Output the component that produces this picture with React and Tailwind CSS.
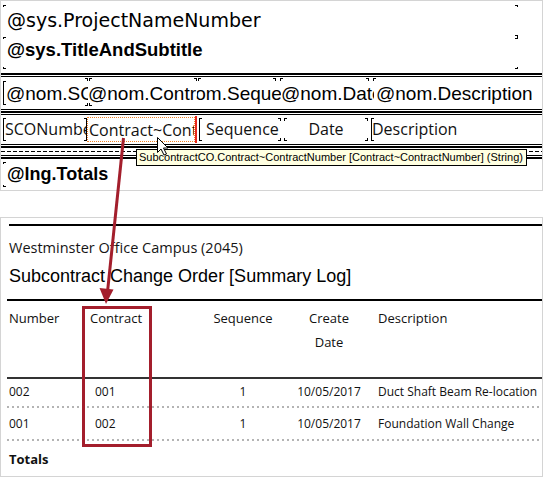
import React from "react";

function Mark({ className }) {
  return <span className={"absolute border-black " + className} />;
}

function TopPanel() {
  return (
    <div className="w-[543px] h-[191px] border border-[#d4d4d4] flex flex-col bg-white">
      {/* header band */}
      <div className="relative h-[72px] pl-[6px]">
        <div className="pt-[8px] leading-[22px] text-[19px] text-black font-['DejaVu_Sans',sans-serif] whitespace-nowrap">
          @sys.ProjectNameNumber
        </div>
        <div className="mt-[7px] leading-[24px] text-[18.5px] font-bold text-black font-['Liberation_Sans',sans-serif] whitespace-nowrap">
          @sys.TitleAndSubtitle
        </div>
        <Mark className="left-[2px] top-[4px] w-[3px] h-[2px] border-l border-t" />
        <Mark className="left-[2px] top-[66px] w-[3px] h-[2px] border-l border-b" />
        <Mark className="left-[2px] top-[36px] w-[3px] h-[2px] border-l border-t" />
        <Mark className="left-[514px] top-[4px] w-[3px] h-[2px] border-r border-t" />
        <Mark className="left-[514px] top-[34px] w-[3px] h-[4px] border-r border-t border-b" />
        <Mark className="left-[514px] top-[66px] w-[3px] h-[2px] border-r border-b" />
      </div>
      {/* double line */}
      <div className="h-[4px] border-t-2 border-b border-black" />
      {/* nom band */}
      <div className="relative h-[32px] flex text-[19px] leading-[22px] text-black font-['Liberation_Sans',sans-serif] whitespace-nowrap">
        <div className="w-[87px] pl-[5px] pt-[6px] overflow-hidden">@nom.SCONumber</div>
        <div className="w-[109px] pt-[6px] overflow-hidden">@nom.Contract</div>
        <div className="w-[84px] pt-[6px] overflow-hidden flex justify-center">@nom.Sequence</div>
        <div className="w-[93px] pt-[6px] overflow-hidden">@nom.Date</div>
        <div className="flex-1 pl-[2px] pt-[6px] overflow-hidden">@nom.Description</div>
        <Mark className="left-[2px] top-[4px] w-[3px] h-[24px] border-l border-t border-b" />
        <Mark className="left-[84px] top-[1px] w-[3px] h-[3px] border-r border-t" />
        <Mark className="left-[88px] top-[1px] w-[3px] h-[3px] border-l border-t" />
        <Mark className="left-[84px] top-[26px] w-[3px] h-[3px] border-r border-b" />
        <Mark className="left-[88px] top-[26px] w-[3px] h-[3px] border-l border-b" />
        <Mark className="left-[193px] top-[1px] w-[3px] h-[3px] border-r border-t" />
        <Mark className="left-[197px] top-[1px] w-[3px] h-[3px] border-l border-t" />
        <Mark className="left-[272px] top-[1px] w-[3px] h-[3px] border-r border-t" />
        <Mark className="left-[279px] top-[1px] w-[3px] h-[3px] border-l border-t" />
        <Mark className="left-[365px] top-[1px] w-[3px] h-[3px] border-r border-t" />
        <Mark className="left-[372px] top-[1px] w-[3px] h-[3px] border-l border-t" />
      </div>
      {/* lines */}
      <div className="h-[1px] bg-black" />
      <div className="h-[1px]" />
      <div className="h-[2px] bg-black" />
      <div className="h-[1px]" />
      <div className="h-[1px] bg-black" />
      {/* field band */}
      <div className="relative h-[29px] flex text-[16px] leading-[22px] text-[#111] font-['Open_Sans',sans-serif] whitespace-nowrap">
        <div className="w-[86px] pl-[4px] pt-[3px] overflow-hidden">SCONumber</div>
        <div className="relative w-[108px] h-[25px] mt-[2px] border border-dotted border-[#f0822a] pl-[1px] pt-[1px] overflow-hidden">
          Contract~ContractNumber
        </div>
        <div className="w-[2px] h-[27px] mt-[1px] bg-[#e8281e]" />
        <div className="w-[86px] pl-[9px] pt-[3px] overflow-hidden">Sequence</div>
        <div className="w-[86px] pt-[3px] overflow-hidden flex justify-center">Date</div>
        <div className="flex-1 pl-[3px] pt-[3px] overflow-hidden">Description</div>
        <Mark className="left-[2px] top-[3px] w-[3px] h-[23px] border-l border-t border-b" />
        <Mark className="left-[83px] top-[3px] w-[3px] h-[23px] border-r border-t border-b" />
        <Mark className="left-[198px] top-[3px] w-[3px] h-[23px] border-l border-t border-b" />
        <Mark className="left-[277px] top-[3px] w-[3px] h-[3px] border-r border-t" />
        <Mark className="left-[277px] top-[23px] w-[3px] h-[3px] border-r border-b" />
        <Mark className="left-[283px] top-[3px] w-[3px] h-[3px] border-l border-t" />
        <Mark className="left-[283px] top-[23px] w-[3px] h-[3px] border-l border-b" />
        <Mark className="left-[364px] top-[3px] w-[3px] h-[3px] border-r border-t" />
        <Mark className="left-[364px] top-[23px] w-[3px] h-[3px] border-r border-b" />
        <Mark className="left-[370px] top-[3px] w-[3px] h-[23px] border-l border-t border-b" />
      </div>
      {/* lines */}
      <div className="h-[1px] bg-black" />
      <div className="h-[1px]" />
      <div className="h-[2px] bg-black" />
      <div className="h-[3px]" />
      <div className="h-[1px] bg-[repeating-linear-gradient(to_right,#000_0px,#000_4px,transparent_4px,transparent_6px)]" />
      <div className="h-[3px]" />
      <div className="h-[1px] bg-black" />
      <div className="h-[1px]" />
      <div className="h-[2px] bg-black" />
      {/* totals band */}
      <div className="relative flex-1 pl-[6px] pt-[4px] text-[18px] leading-[22px] font-bold text-black font-['Liberation_Sans',sans-serif]">
        @lng.Totals
        <Mark className="left-[2px] top-[3px] w-[3px] h-[2px] border-l border-t" />
        <Mark className="left-[2px] top-[26px] w-[3px] h-[2px] border-l border-b" />
      </div>
    </div>
  );
}

const dotted =
  "h-[2px] ml-[6px] bg-[repeating-linear-gradient(to_right,#b4b4b4_0px,#b4b4b4_2px,transparent_2px,transparent_5px)]";

function Row({ a, b, c, d, e }) {
  return (
    <div className="flex h-[16px] text-[12px] leading-[16px] text-[#111] font-['Open_Sans',sans-serif] whitespace-nowrap">
      <div className="w-[86px] pl-[8px]">{a}</div>
      <div className="w-[119px] pl-[8px]">{b}</div>
      <div className="w-[74px] text-center">{c}</div>
      <div className="w-[98px] text-center">{d}</div>
      <div className="flex-1 pl-[0px]">{e}</div>
    </div>
  );
}

function BottomPanel() {
  return (
    <div className="w-[543px] h-[260px] border border-[#d4d4d4] flex flex-col bg-white">
      <div className="mt-[6px] ml-[8px] h-[2px] bg-black" />
      <div className="mt-[12px] pl-[8px] text-[14.5px] leading-[20px] text-[#151515] font-['Open_Sans',sans-serif] whitespace-nowrap">
        Westminster Office Campus (2045)
      </div>
      <div className="mt-[8px] pl-[8px] text-[18px] leading-[21px] text-black font-['Liberation_Sans',sans-serif] whitespace-nowrap">
        Subcontract Change Order [Summary Log]
      </div>
      <div className="mt-[12px] ml-[6px] h-[2px] bg-black" />
      <div className="flex pt-[5px] h-[76px] text-[13px] leading-[24px] text-[#111] font-['Open_Sans',sans-serif] whitespace-nowrap">
        <div className="w-[81px] pl-[8px]">Number</div>
        <div className="w-[124px] pl-[8px]">Contract</div>
        <div className="w-[74px] text-center">Sequence</div>
        <div className="w-[98px] text-center">
          Create
          <br />
          Date
        </div>
        <div className="flex-1">Description</div>
      </div>
      <div className="ml-[6px] h-[2px] bg-[#333]" />
      <div className="pt-[5px] h-[27px]">
        <Row a="002" b="001" c="1" d="10/05/2017" e="Duct Shaft Beam Re-location" />
      </div>
      <div className={dotted} />
      <div className="pt-[8px] h-[31px]">
        <Row a="001" b="002" c="1" d="10/05/2017" e="Foundation Wall Change" />
      </div>
      <div className={dotted} />
      <div className="pl-[8px] pt-[9px] text-[13px] leading-[18px] font-bold text-[#111] font-['Open_Sans',sans-serif]">
        Totals
      </div>
    </div>
  );
}

export default function App() {
  return (
    <div className="relative w-[544px] h-[478px] bg-white overflow-hidden">
      <TopPanel />
      <div className="h-[26px]" />
      <BottomPanel />

      {/* tooltip */}
      <div className="absolute left-[136px] top-[149px] w-[391px] h-[17px] bg-[#ffffe1] border border-black pl-[2px] text-[11px] leading-[15px] text-black font-['Liberation_Sans',sans-serif] whitespace-nowrap overflow-hidden">
        SubcontractCO.Contract~ContractNumber [Contract~ContractNumber] (String)
      </div>

      {/* highlight box */}
      <div className="absolute left-[82px] top-[306px] w-[70px] h-[141px] border-[3px] border-[#a31e2c]" />

      {/* arrow + cursor */}
      <svg className="absolute left-0 top-0 pointer-events-none" width="544" height="478" viewBox="0 0 544 478">
        <line x1="123.5" y1="138" x2="107.5" y2="292" stroke="#a31e2c" strokeWidth="3" />
        <polygon points="106,304 99.5,288 113.5,289.5" fill="#a31e2c" />
        <path
          d="M157.5 137.5 L157.5 152.5 L161 149 L164 155 L166.5 154 L163.5 148 L168 148 Z"
          fill="#fff"
          stroke="#000"
          strokeWidth="1"
          strokeLinejoin="miter"
        />
      </svg>
    </div>
  );
}
